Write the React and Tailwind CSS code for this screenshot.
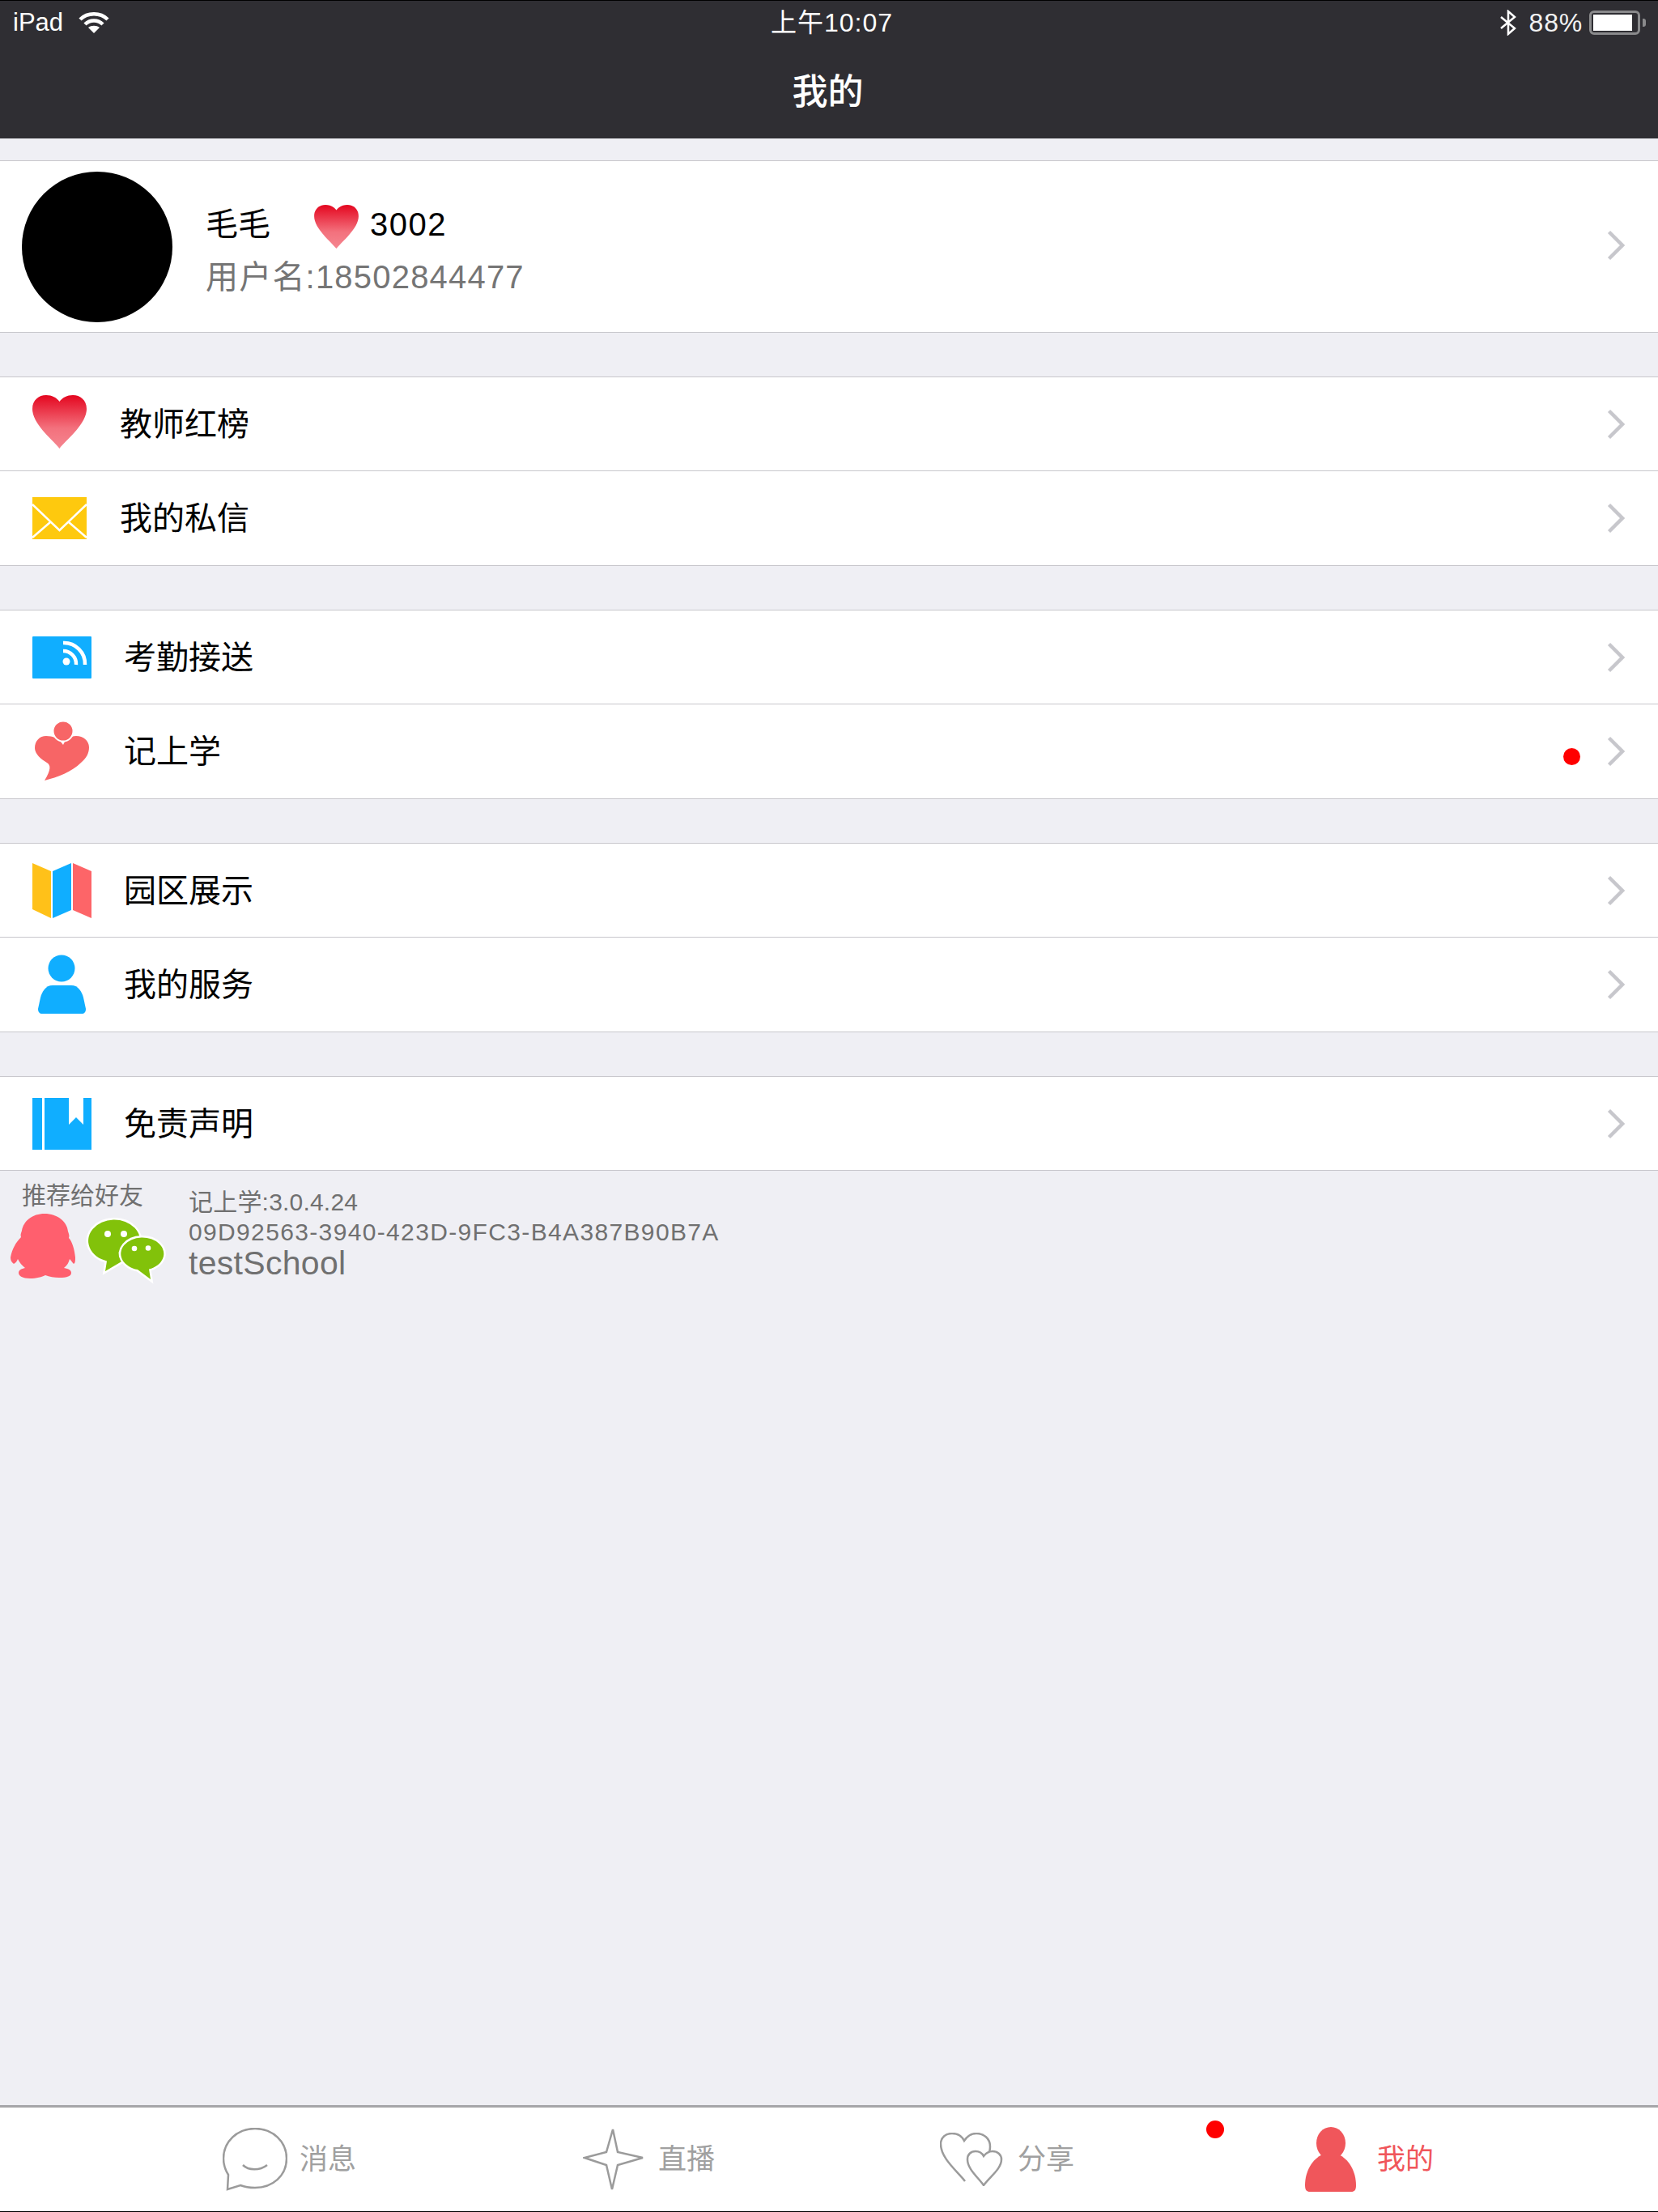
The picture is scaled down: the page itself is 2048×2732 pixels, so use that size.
import { useId } from "react";

const font = { fontFamily: '"Liberation Sans", "Noto Sans CJK SC", sans-serif' };

function Chevron() {
  return (
    <svg width="22" height="38" viewBox="0 0 22 38" className="shrink-0" fill="none">
      <path d="M2.5 2.5 L19 19 L2.5 35.5" stroke="#c7c7cc" strokeWidth="4.5" />
    </svg>
  );
}

function Heart({ w, h }) {
  const id = useId();
  return (
    <svg width={w} height={h} viewBox="0 0 67 66">
      <defs>
        <linearGradient id={id} x1="0" y1="0" x2="0" y2="1">
          <stop offset="0" stopColor="#e4061f" />
          <stop offset="0.62" stopColor="#f3717d" />
          <stop offset="1" stopColor="#f58690" />
        </linearGradient>
      </defs>
      <path
        d="M33.5 66 C26 56 0 36 0 17 C0 6 8 0 17 0 C24 0 30 3 33.5 8 C37 3 43 0 50 0 C59 0 67 6 67 17 C67 36 41 56 33.5 66 Z"
        fill={`url(#${id})`}
      />
    </svg>
  );
}

function MailIcon() {
  return (
    <svg width="67" height="52" viewBox="0 0 67 52">
      <rect width="67" height="52" fill="#fec90e" />
      <path d="M0 9 L33.5 41 L67 9" fill="none" stroke="#fff" strokeWidth="2.5" />
      <path d="M0 50 L22 31 M67 50 L45 31" fill="none" stroke="#fff" strokeWidth="2.5" />
    </svg>
  );
}

function RssIcon() {
  return (
    <svg width="73" height="52" viewBox="0 0 73 52">
      <rect width="73" height="52" rx="1" fill="#10aeff" />
      <circle cx="42" cy="31" r="4.5" fill="#fff" />
      <path d="M38 18 A16 16 0 0 1 54 35" fill="none" stroke="#fff" strokeWidth="4.5" />
      <path d="M38 8 A26 26 0 0 1 65 35" fill="none" stroke="#fff" strokeWidth="4.5" />
    </svg>
  );
}

function LogoIcon() {
  return (
    <svg width="67" height="74" viewBox="0 0 67 74">
      <path
        d="M35 29 C30 21 22 18 14 18 C6 18 0 24 0 33 C0 40 8 47 15 51 C20 54 20 60 12 73 C28 69 46 62 57 51 C64 45 67 39 67 32 C67 24 60 18 51 18 C44 18 38 22 35 29 Z"
        fill="#f76566"
      />
      <circle cx="35" cy="12" r="12.5" fill="#f76566" stroke="#fff" strokeWidth="2" />
    </svg>
  );
}

function MapIcon() {
  return (
    <svg width="73" height="68" viewBox="0 0 73 68">
      <polygon points="0,0 23,10 23,68 0,57" fill="#ffc119" />
      <polygon points="25,10 48,0 48,58 25,68" fill="#10aeff" />
      <polygon points="50,0 73,10 73,68 50,58" fill="#fd6568" />
    </svg>
  );
}

function PersonIcon() {
  return (
    <svg width="59" height="74" viewBox="0 0 59 74">
      <circle cx="29" cy="17" r="16.5" fill="#10aeff" />
      <path
        d="M18 38 H41 C50 38 54 46 56 53 L59 67 C59 71 57 73 54 73 H5 C2 73 0 71 0 67 L3 53 C5 46 9 38 18 38 Z"
        fill="#10aeff"
      />
    </svg>
  );
}

function BookIcon() {
  return (
    <svg width="73" height="64" viewBox="0 0 73 64">
      <rect width="12" height="64" fill="#10aeff" />
      <path d="M15 0 H45 V33 L54 24 L63 33 V0 H73 V64 H15 Z" fill="#10aeff" />
    </svg>
  );
}

function PenguinIcon() {
  return (
    <svg width="80" height="80" viewBox="0 0 80 80">
      <path
        d="M42 0 C58 0 70 10 71 22 C72 25 73 27 72 30 C76 34 79 44 80 54 C80 58 80 61 78 62 C76 60 75 58 73 56 C72 60 70 64 66 67 C72 68 75 70 75 73 C75 77 70 79 60 79 C54 79 48 78 43 76 C39 78 32 80 24 80 C15 80 10 77 10 73 C10 70 13 68 18 67 C14 64 11 60 9 56 C8 59 6 61 4 62 C1 60 0 57 0 54 C2 44 6 36 13 29 C12 26 13 24 14 21 C16 9 27 0 42 0 Z"
        fill="#ff5f6e"
      />
    </svg>
  );
}

function WechatIcon() {
  return (
    <svg width="96" height="80" viewBox="0 0 96 80" className="overflow-visible">
      <path d="M24 54.5 A32 26 0 1 1 44 54 L22 67 Z" fill="#82c20a" stroke="#fff" strokeWidth="5" paintOrder="stroke" />
      <path d="M62 65 A26.5 20 0 1 1 76 64.5 L78 77 Z" fill="#82c20a" stroke="#fff" strokeWidth="5" paintOrder="stroke" />
      <circle cx="25" cy="21" r="4" fill="#fff" />
      <circle cx="45" cy="21" r="4" fill="#fff" />
      <circle cx="58" cy="39" r="3.3" fill="#fff" />
      <circle cx="75" cy="38.5" r="3.3" fill="#fff" />
    </svg>
  );
}

function TabMessage() {
  return (
    <svg width="80" height="78" viewBox="0 0 80 78" fill="none" stroke="#9b9b9b" strokeWidth="2.5">
      <path d="M7 58 C2 50 1 44 1 38 C1 17 18 1 40 1 C62 1 79 17 79 38 C79 59 62 74 40 74 C33 74 27 73 22 71 L6 76 Z" />
      <path d="M25 46 C32 53 46 53 55 46" />
    </svg>
  );
}

function TabStar() {
  return (
    <svg width="76" height="78" viewBox="0 0 76 78" fill="none" stroke="#9b9b9b" strokeWidth="2.5">
      <path d="M37 2 L43 30 L74 37 L43 46 L36 76 L29 46 L2 37 L29 30 Z" />
    </svg>
  );
}

function TabHearts() {
  return (
    <svg width="78" height="66" viewBox="0 0 78 66" fill="none" stroke="#9b9b9b" strokeWidth="2.5">
      <path d="M31 60 C22 48 1 32 1 14 C1 6 7 1 15 1 C21 1 27 4 30 10 C34 4 40 1 45 1 C54 1 62 7 62 17 C62 21 61 24 60 25" />
      <path d="M54 65 C47 55 34 45 34 33 C34 27 38 23 44 23 C48 23 52 25 54 29 C57 25 61 23 65 23 C71 23 76 27 76 33 C76 45 61 55 54 65 Z" fill="#fff" />
    </svg>
  );
}

function TabPerson() {
  return (
    <svg width="63" height="80" viewBox="0 0 63 80">
      <ellipse cx="32" cy="20" rx="18" ry="20" fill="#f0565b" />
      <path d="M22 34 H41 C54 39 63 55 63 72 C63 78 61 80 57 80 H6 C2 80 0 78 0 72 C0 55 9 39 22 34 Z" fill="#f0565b" />
    </svg>
  );
}

function StatusBar() {
  return (
    <div className="relative flex h-[54px] items-center text-[32px] text-white">
      <span className="ml-[16px] text-[31px]">iPad</span>
      <svg width="38" height="28" viewBox="0 0 38 28" className="ml-[19px]" fill="none" stroke="#fff" strokeWidth="4.5">
        <path d="M2 10 C11 1 27 1 36 10" />
        <path d="M8 16 C14 10 24 10 30 16" />
        <path d="M19 27 L12 20 C16 17 22 17 26 20 Z" fill="#fff" stroke="none" />
      </svg>
      <span className="absolute left-[952px] tracking-[1px]">上午10:07</span>
      <div className="ml-auto flex items-center">
        <svg width="20" height="32" viewBox="0 0 20 32" fill="none" stroke="#fff" strokeWidth="2.5">
          <path d="M1 9 L18 23 L10 30 V2 L18 9 L1 23" />
        </svg>
        <span className="ml-[16px] tracking-[0.8px] text-[#f2f2f2]">88%</span>
        <div className="ml-[8px] flex h-[30px] w-[63px] items-center rounded-[6px] border-[3px] border-[#8a8a8c] pl-[2px]">
          <div className="h-[20px] w-[48px] bg-white" />
        </div>
        <div className="ml-[3px] mr-[15px] h-[10px] w-[4px] rounded-r-[3px] bg-[#8a8a8c]" />
      </div>
    </div>
  );
}

function Row({ icon, label, indent, dot, last, single }) {
  return (
    <div className={`flex items-center pr-[41px] ${single ? "h-[115px]" : "h-[116px]"} ${last ? "" : "border-b border-[#c8c7cc]"}`}>
      <div className={`flex shrink-0 items-center ${indent}`}>{icon}</div>
      <span className="text-[40px] text-black">{label}</span>
      {dot && <div className="ml-auto mr-[33px] mt-[12px] h-[21px] w-[21px] rounded-full bg-[#ff0000]" />}
      <div className={dot ? "" : "ml-auto"}>
        <Chevron />
      </div>
    </div>
  );
}

function Group({ rows }) {
  return (
    <div className="mt-[54px] border-y border-[#c8c7cc] bg-white">
      {rows.map((row, index) => (
        <Row key={row.label} {...row} last={index === rows.length - 1} single={rows.length === 1} />
      ))}
    </div>
  );
}

export default function App() {
  const groups = [
    [
      {
        icon: (
          <div className="-mt-[5px]">
            <Heart w={67} h={66} />
          </div>
        ),
        label: "教师红榜",
        indent: "w-[148px] pl-[40px]",
      },
      { icon: <MailIcon />, label: "我的私信", indent: "w-[148px] pl-[40px]" },
    ],
    [
      { icon: <RssIcon />, label: "考勤接送", indent: "w-[153px] pl-[40px]" },
      { icon: <LogoIcon />, label: "记上学", indent: "w-[153px] pl-[43px]", dot: true },
    ],
    [
      { icon: <MapIcon />, label: "园区展示", indent: "w-[153px] pl-[40px]" },
      { icon: <PersonIcon />, label: "我的服务", indent: "w-[153px] pl-[47px]" },
    ],
    [{ icon: <BookIcon />, label: "免责声明", indent: "w-[153px] pl-[40px]" }],
  ];

  const tabs = [
    { icon: <TabMessage />, label: "消息", gap: "ml-[15px]" },
    { icon: <TabStar />, label: "直播", gap: "ml-[17px]" },
    { icon: <TabHearts />, label: "分享", gap: "ml-[18px]" },
    { icon: <TabPerson />, label: "我的", gap: "ml-[26px]", active: true },
  ];

  return (
    <div className="flex h-[2732px] w-[2048px] flex-col bg-[#efeff4]" style={font}>
      <header className="h-[171px] border-t border-black bg-[#2f2e33]">
        <StatusBar />
        <div className="mt-[29px] pr-[3px] text-center text-[44px] leading-[60px] font-medium text-white">我的</div>
      </header>

      <div className="mt-[27px] flex h-[213px] items-center border-y border-[#c8c7cc] bg-white pr-[41px] pl-[27px]">
        <div className="h-[186px] w-[186px] shrink-0 rounded-full bg-black" />
        <div className="mt-[14px] ml-[41px]">
          <div className="flex h-[54px] items-center">
            <span className="-mt-[6px] text-[40px] text-black">毛毛</span>
            <div className="ml-[54px]">
              <Heart w={55} h={54} />
            </div>
            <span className="-mt-[6px] ml-[14px] text-[40px] tracking-[1.5px] text-black">3002</span>
          </div>
          <div className="mt-[7px] text-[40px] leading-[56px] tracking-[1.2px] text-[#757575]">用户名:18502844477</div>
        </div>
        <div className="-mt-[3px] ml-auto">
          <Chevron />
        </div>
      </div>

      {groups.map((rows) => (
        <Group key={rows[0].label} rows={rows} />
      ))}

      <div className="flex text-[#707070]">
        <div className="w-[233px] shrink-0">
          <div className="mt-[13px] pl-[27px] text-[30px] leading-[36px]">推荐给好友</div>
          <div className="mt-[4px] flex pl-[13px]">
            <PenguinIcon />
            <div className="mt-[4px] ml-[15px]">
              <WechatIcon />
            </div>
          </div>
        </div>
        <div className="mt-[20px]">
          <div className="text-[30px] leading-[38px] tracking-[0.2px]">记上学:3.0.4.24</div>
          <div className="text-[30px] leading-[36px] tracking-[1.35px]">09D92563-3940-423D-9FC3-B4A387B90B7A</div>
          <div className="text-[41px] leading-[40px] tracking-[0.3px]">testSchool</div>
        </div>
      </div>

      <div className="flex-1" />

      <nav className="relative grid h-[132px] grid-cols-[445px_441px_451px_1fr] items-center border-t-[3px] border-b border-t-[#a5a5a8] border-b-black bg-white pl-[275px]">
        {tabs.map((tab) => (
          <div key={tab.label} className="flex items-center">
            {tab.icon}
            <span className={`${tab.gap} text-[35px] ${tab.active ? "text-[#f0565b]" : "text-[#a0a0a0]"}`}>{tab.label}</span>
          </div>
        ))}
        <div className="absolute top-[16px] left-[1490px] h-[22px] w-[22px] rounded-full bg-[#ff0000]" />
      </nav>
    </div>
  );
}
